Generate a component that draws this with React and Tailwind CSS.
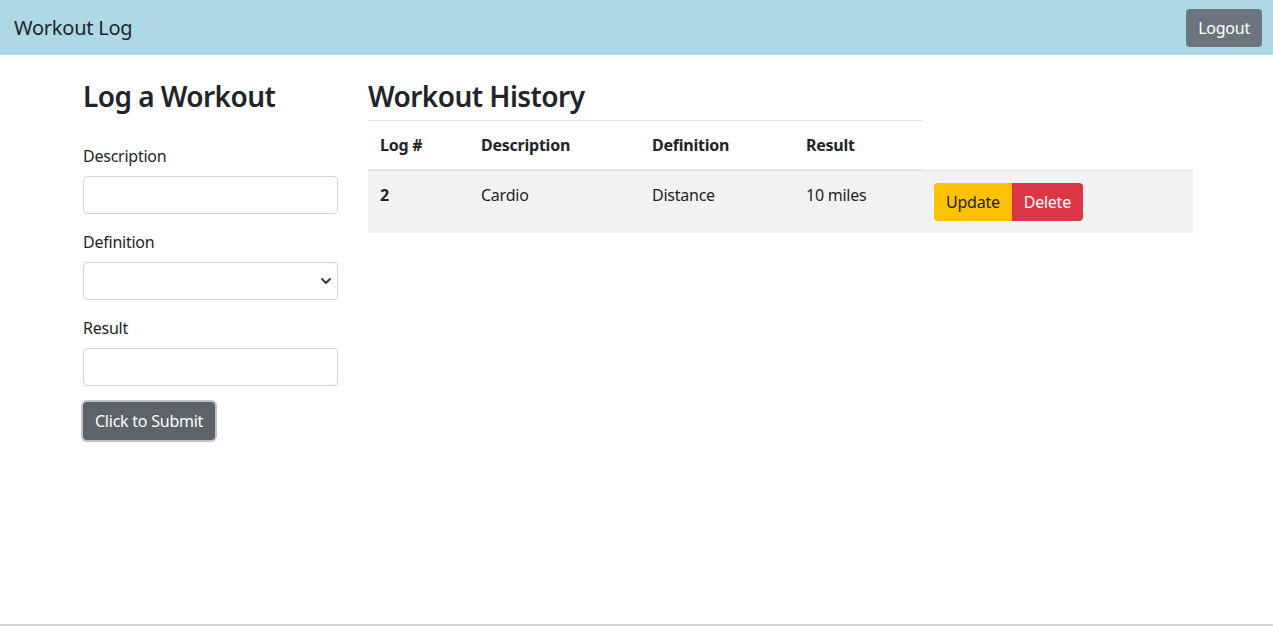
import { ChevronDown } from 'lucide-react';

const font = { fontFamily: '"Noto Sans", "Liberation Sans", sans-serif' };

function Field({ label, children }) {
    return (
        <div className="mb-4">
            <label className="block mb-2 leading-6">{label}</label>
            {children}
        </div>
    );
}

export default function App() {
    const logs = [{ id: 2, description: 'Cardio', definition: 'Distance', result: '10 miles' }];

    return (
        <div className="h-[626px] flex flex-col bg-white text-[#212529] text-base tracking-[-0.015em]" style={font}>
            {/* Navbar */}
            <nav className="h-[55px] shrink-0 bg-[#add8e6] flex items-center justify-between pl-[14px] pr-[11px]">
                <span className="text-[20px] leading-[30px]">Workout Log</span>
                <button className="h-[38px] px-3 rounded-[4px] bg-[#6c757d] text-white leading-6">Logout</button>
            </nav>

            <div className="flex-1 flex pt-6 pl-[83px] gap-[30px]">
                {/* Log form */}
                <div className="w-[255px]">
                    <h3 className="text-[28px] leading-[34px] font-semibold mb-[7px] tracking-[-0.02em]">Log a Workout</h3>
                    <form className="mt-[31px]" onSubmit={(e) => e.preventDefault()}>
                        <Field label="Description">
                            <input type="text" className="block w-full h-[38px] px-3 border border-[#ced4da] rounded-[4px] bg-white" />
                        </Field>
                        <Field label="Definition">
                            <div className="relative">
                                <select className="block w-full h-[38px] px-3 border border-[#ced4da] rounded-[4px] bg-white appearance-none">
                                    <option value=""></option>
                                </select>
                                <ChevronDown className="absolute right-[4px] top-[11px] w-4 h-4 text-[#343a40] pointer-events-none" strokeWidth={3} />
                            </div>
                        </Field>
                        <Field label="Result">
                            <input type="text" className="block w-full h-[38px] px-3 border border-[#ced4da] rounded-[4px] bg-white" />
                        </Field>
                        <button type="submit" className="h-[38px] px-3 rounded-[4px] bg-[#5c636a] text-white leading-6 shadow-[0_0_0_2px_rgba(130,138,145,0.5)]">
                            Click to Submit
                        </button>
                    </form>
                </div>

                {/* History table */}
                <div className="w-[825px]">
                    <h3 className="text-[28px] leading-[34px] font-semibold mb-[7px] tracking-[-0.02em]">Workout History</h3>
                    <table className="w-full border-collapse text-left">
                        <thead>
                            <tr>
                                <th className="w-[101px] p-3 leading-6 font-bold border-t border-b-2 border-[#dee2e6]">Log #</th>
                                <th className="w-[171px] p-3 leading-6 font-bold border-t border-b-2 border-[#dee2e6]">Description</th>
                                <th className="w-[154px] p-3 leading-6 font-bold border-t border-b-2 border-[#dee2e6]">Definition</th>
                                <th className="w-[128px] p-3 leading-6 font-bold border-t border-b-2 border-[#dee2e6]">Result</th>
                            </tr>
                        </thead>
                        <tbody>
                            {logs.map((log) => (
                                <tr key={log.id} className="bg-[#f2f2f2]">
                                    <td className="p-3 leading-6 align-top font-bold border-t border-[#dee2e6]">{log.id}</td>
                                    <td className="p-3 leading-6 align-top border-t border-[#dee2e6]">{log.description}</td>
                                    <td className="p-3 leading-6 align-top border-t border-[#dee2e6]">{log.definition}</td>
                                    <td className="p-3 leading-6 align-top border-t border-[#dee2e6]">{log.result}</td>
                                    <td className="p-3 align-top border-t border-[#dee2e6]">
                                        <div className="flex">
                                            <button className="h-[38px] px-3 rounded-l-[4px] bg-[#ffc107] text-[#212529] leading-6">Update</button>
                                            <button className="h-[38px] px-3 rounded-r-[4px] bg-[#dc3545] text-white leading-6">Delete</button>
                                        </div>
                                    </td>
                                </tr>
                            ))}
                        </tbody>
                    </table>
                </div>
            </div>

            <div className="h-[2px] shrink-0 bg-[#d6d6d6]" />
        </div>
    );
}
